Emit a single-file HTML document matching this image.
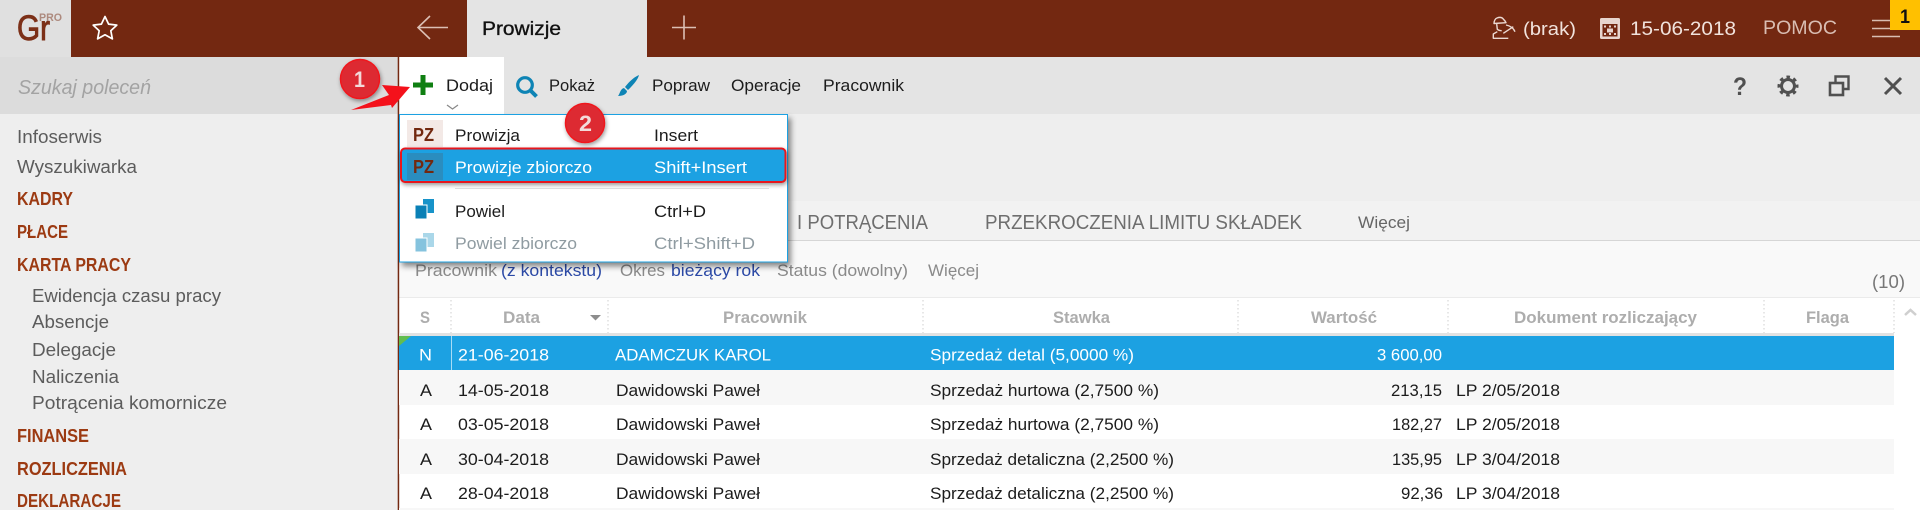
<!DOCTYPE html>
<html lang="pl">
<head>
<meta charset="utf-8">
<title>Prowizje</title>
<style>
html,body{margin:0;padding:0;width:1920px;height:510px;overflow:hidden;background:#fff}
svg{display:block}
text{font-family:"Liberation Sans",sans-serif;font-size:17px;fill:#1c1c1c;white-space:pre}
.hd{font-size:18px;fill:#f1e2dc}
.nav{font-size:18px;fill:#5c5c5c}
.sec{font-size:18px;font-weight:bold;fill:#9c3a12}
.tab{font-size:20px;fill:#6e6e6e}
.fl{font-size:17px;fill:#8a8a8a}
.fb{font-size:17px;fill:#2b49a6}
.th{font-size:17px;font-weight:bold;fill:#adadad}
.w{fill:#fff}
.pz{font-size:18px;font-weight:bold;fill:#72280f}
.dis{fill:#8f9ba1}
</style>
</head>
<body>
<svg width="1920" height="510" viewBox="0 0 1920 510" xmlns="http://www.w3.org/2000/svg">
<defs>
<filter id="sh" x="-5%" y="-5%" width="112%" height="115%"><feDropShadow dx="3" dy="4" stdDeviation="3" flood-color="#000" flood-opacity=".45"/></filter>
<filter id="sc" x="-30%" y="-30%" width="160%" height="160%"><feDropShadow dx="1" dy="2" stdDeviation="2" flood-color="#000" flood-opacity=".4"/></filter>
</defs>

<!-- backgrounds -->
<rect width="1920" height="510" fill="#fff"/>
<rect x="0" y="0" width="1920" height="57" fill="#732811"/>
<rect x="0" y="0" width="71" height="57" fill="#e0e0e0"/>
<rect x="467" y="0" width="180" height="57" fill="#e4e4e4"/>
<rect x="0" y="57" width="398" height="57" fill="#dcdcdc"/>
<rect x="0" y="114" width="398" height="396" fill="#eeeeee"/>
<rect x="399" y="57" width="1521" height="57" fill="#e4e4e4"/>
<rect x="399" y="57" width="105" height="57" fill="#fff"/>
<rect x="399" y="114" width="1521" height="87" fill="#eeeeee"/>
<rect x="399" y="201" width="1521" height="39" fill="#f2f2f2"/>
<rect x="399" y="240" width="1521" height="1" fill="#d6d6d6"/>
<rect x="399" y="241" width="1521" height="56" fill="#f9f9f9"/>
<rect x="399" y="297" width="1521" height="1" fill="#ebebeb"/>
<rect x="397.700" y="57" width="1.500" height="453" fill="#732811"/>

<!-- top bar -->
<text x="17" y="40" style="font-size:35px;fill:#7c3018;stroke:#7c3018;stroke-width:.9" textLength="33" lengthAdjust="spacingAndGlyphs">Gr</text>
<text x="39" y="21" style="font-size:11px;font-weight:bold;fill:#ad8a7e" textLength="23" lengthAdjust="spacingAndGlyphs">PRO</text>
<path d="M105 16.500l3.600 7.600 8.200 1-6 5.600 1.600 8.200-7.400-4.100-7.400 4.100 1.600-8.200-6-5.600 8.200-1z" fill="none" stroke="#fff" stroke-width="1.700" stroke-linejoin="round"/>
<path d="M430 16l-12 11.500 12 11.500M418 27.500h30" fill="none" stroke="#dcbfb4" stroke-width="1.600"/>
<text x="482" y="35" style="font-size:19px;fill:#111;stroke:#111;stroke-width:.35" textLength="79" lengthAdjust="spacingAndGlyphs">Prowizje</text>
<path d="M684 15.500v24M672 27.500h24" fill="none" stroke="#dcbfb4" stroke-width="1.600"/>

<g fill="none" stroke="#ecd9d2" stroke-width="1.400" stroke-linejoin="round">
<path d="M1494 23.500c0-3 1.500-5 3-5.500 2.500-1 5-.8 6.500 1.300 1.200 1.100 2 2.200 2.500 3.400zM1496.700 24l.6 5.300c1 1 2.500 1.400 4.400 1.400"/>
<path d="M1497.300 31.700l-4 2.300v4.300h15M1503.300 33.300l10-6.600M1506 25c4 .8 7.500 3 9 6.700"/>
</g>
<text class="hd" x="1523" y="35" textLength="53" lengthAdjust="spacingAndGlyphs">(brak)</text>
<rect x="1600" y="18" width="20" height="21" rx="1.500" fill="#e8d5ce"/>
<rect x="1602.500" y="24" width="15" height="12.500" fill="#732811"/>
<g fill="#e8d5ce"><rect x="1604" y="25.500" width="2" height="2"/><rect x="1609" y="25.500" width="2" height="2"/><rect x="1614" y="25.500" width="2" height="2"/><rect x="1604" y="33" width="2" height="2"/><rect x="1609" y="33" width="2" height="2"/><rect x="1614" y="33" width="2" height="2"/><rect x="1607" y="28.500" width="6" height="4"/></g>
<text class="hd" x="1630" y="35" style="font-size:19px" textLength="106" lengthAdjust="spacingAndGlyphs">15-06-2018</text>
<text x="1763" y="34" style="font-size:19px;fill:#d9bdb2" textLength="74" lengthAdjust="spacingAndGlyphs">POMOC</text>
<path d="M1872 20.500h28M1872 28.500h28M1872 36.500h28" stroke="#d9bdb2" stroke-width="1.500"/>
<rect x="1890" y="0" width="30" height="30" fill="#ffc000"/>
<text x="1900" y="23" style="font-size:19px;font-weight:bold;fill:#111" textLength="10" lengthAdjust="spacingAndGlyphs">1</text>

<!-- search row and toolbar -->
<text x="18" y="94" style="font-size:20px;font-style:italic;fill:#a3a3a3" textLength="133" lengthAdjust="spacingAndGlyphs">Szukaj poleceń</text>
<path d="M423 75v20M413 85h20" stroke="#0f7f12" stroke-width="5"/>
<text x="446" y="91" textLength="47" lengthAdjust="spacingAndGlyphs">Dodaj</text>
<path d="M447 105l5.500 4 5.500-4" fill="none" stroke="#888" stroke-width="1.200"/>
<circle cx="525" cy="85" r="7.300" fill="none" stroke="#0e84b5" stroke-width="3.200"/>
<path d="M530.500 90.500l6 6" stroke="#0e84b5" stroke-width="4"/>
<text x="549" y="91" textLength="46" lengthAdjust="spacingAndGlyphs">Pokaż</text>
<path d="M639 75c-1 5-7 11-11 15l-3-3c4-5 9-10 14-12zM624 88l3 3c0 3-4 5-9 5 2-2 2-7 6-8z" fill="#0e84b5"/>
<text x="652" y="91" textLength="58" lengthAdjust="spacingAndGlyphs">Popraw</text>
<text x="731" y="91" textLength="70" lengthAdjust="spacingAndGlyphs">Operacje</text>
<text x="823" y="91" textLength="81" lengthAdjust="spacingAndGlyphs">Pracownik</text>
<text x="1733" y="95" style="font-size:25px;font-weight:bold;fill:#505050" textLength="14" lengthAdjust="spacingAndGlyphs">?</text>
<circle cx="1788" cy="86" r="6.500" fill="none" stroke="#505050" stroke-width="3"/>
<circle cx="1788" cy="86" r="9" fill="none" stroke="#505050" stroke-width="3" stroke-dasharray="3.530 3.530" stroke-dashoffset="1.760"/>
<path d="M1835.500 82v-5.500h13v12.500h-5" fill="none" stroke="#505050" stroke-width="2.400"/>
<rect x="1830" y="83" width="13" height="12" fill="none" stroke="#505050" stroke-width="2.600"/>
<path d="M1885 78l16 16M1901 78l-16 16" stroke="#505050" stroke-width="3"/>

<!-- sidebar -->
<text class="nav" x="17" y="143" textLength="85" lengthAdjust="spacingAndGlyphs">Infoserwis</text>
<text class="nav" x="17" y="173" textLength="120" lengthAdjust="spacingAndGlyphs">Wyszukiwarka</text>
<text class="sec" x="17" y="205" textLength="56" lengthAdjust="spacingAndGlyphs">KADRY</text>
<text class="sec" x="17" y="238" textLength="51" lengthAdjust="spacingAndGlyphs">PŁACE</text>
<text class="sec" x="17" y="271" textLength="114" lengthAdjust="spacingAndGlyphs">KARTA PRACY</text>
<text class="nav" x="32" y="302" textLength="189" lengthAdjust="spacingAndGlyphs">Ewidencja czasu pracy</text>
<text class="nav" x="32" y="328" textLength="77" lengthAdjust="spacingAndGlyphs">Absencje</text>
<text class="nav" x="32" y="356" textLength="84" lengthAdjust="spacingAndGlyphs">Delegacje</text>
<text class="nav" x="32" y="383" textLength="87" lengthAdjust="spacingAndGlyphs">Naliczenia</text>
<text class="nav" x="32" y="409" textLength="195" lengthAdjust="spacingAndGlyphs">Potrącenia komornicze</text>
<text class="sec" x="17" y="442" textLength="72" lengthAdjust="spacingAndGlyphs">FINANSE</text>
<text class="sec" x="17" y="475" textLength="110" lengthAdjust="spacingAndGlyphs">ROZLICZENIA</text>
<text class="sec" x="17" y="507" textLength="104" lengthAdjust="spacingAndGlyphs">DEKLARACJE</text>

<!-- tabs -->
<text class="tab" x="797" y="229" textLength="131" lengthAdjust="spacingAndGlyphs">I POTRĄCENIA</text>
<text class="tab" x="985" y="229" textLength="317" lengthAdjust="spacingAndGlyphs">PRZEKROCZENIA LIMITU SKŁADEK</text>
<text x="1358" y="228" style="fill:#666" textLength="52" lengthAdjust="spacingAndGlyphs">Więcej</text>

<!-- filters -->
<text class="fl" x="415" y="276" textLength="82" lengthAdjust="spacingAndGlyphs">Pracownik</text>
<text class="fb" x="501" y="276" textLength="101" lengthAdjust="spacingAndGlyphs">(z kontekstu)</text>
<text class="fl" x="620" y="276" textLength="45" lengthAdjust="spacingAndGlyphs">Okres</text>
<text class="fb" x="671" y="276" textLength="89" lengthAdjust="spacingAndGlyphs">bieżący rok</text>
<text class="fl" x="777" y="276" textLength="131" lengthAdjust="spacingAndGlyphs">Status (dowolny)</text>
<text class="fl" x="928" y="276" textLength="51" lengthAdjust="spacingAndGlyphs">Więcej</text>
<text x="1872" y="288" style="font-size:18px;fill:#777" textLength="33" lengthAdjust="spacingAndGlyphs">(10)</text>

<!-- table header -->
<rect x="399" y="333" width="1495" height="3" fill="#e2e2e2"/>
<g stroke="#cfcfcf" stroke-dasharray="1.500 2.500"><path d="M451 300v33M608 300v33M923 300v33M1238 300v33M1448 300v33M1764 300v33M1894 300v33"/></g>
<text class="th" x="420" y="323" textLength="10" lengthAdjust="spacingAndGlyphs">S</text>
<text class="th" x="503" y="323" textLength="37" lengthAdjust="spacingAndGlyphs">Data</text>
<path d="M590 315h11l-5.500 5.500z" fill="#8d8d8d"/>
<text class="th" x="723" y="323" textLength="84" lengthAdjust="spacingAndGlyphs">Pracownik</text>
<text class="th" x="1053" y="323" textLength="57" lengthAdjust="spacingAndGlyphs">Stawka</text>
<text class="th" x="1311" y="323" textLength="66" lengthAdjust="spacingAndGlyphs">Wartość</text>
<text class="th" x="1514" y="323" textLength="183" lengthAdjust="spacingAndGlyphs">Dokument rozliczający</text>
<text class="th" x="1806" y="323" textLength="43" lengthAdjust="spacingAndGlyphs">Flaga</text>
<path d="M1905 315l5.500-5 5.500 5" fill="none" stroke="#cfcfcf" stroke-width="2.500"/>

<!-- rows -->
<rect x="399" y="336" width="1495" height="34" fill="#1ca1e2"/>
<rect x="399" y="370" width="1495" height="35" fill="#f7f7f7"/>
<rect x="399" y="439" width="1495" height="35" fill="#f7f7f7"/>
<rect x="399" y="508" width="1495" height="2" fill="#f7f7f7"/>
<rect x="451" y="336" width="1" height="34" fill="#a8dcf5"/>
<path d="M399 336h12l-12 10z" fill="#62bd4f"/>

<text class="w" x="419" y="360.500" textLength="13" lengthAdjust="spacingAndGlyphs">N</text>
<text class="w" x="458" y="360.500" textLength="91" lengthAdjust="spacingAndGlyphs">21-06-2018</text>
<text class="w" x="615" y="360.500" textLength="156" lengthAdjust="spacingAndGlyphs">ADAMCZUK KAROL</text>
<text class="w" x="930" y="360.500" textLength="204" lengthAdjust="spacingAndGlyphs">Sprzedaż detal (5,0000 %)</text>
<text class="w" x="1377" y="360.500" textLength="65" lengthAdjust="spacingAndGlyphs">3 600,00</text>

<text x="420" y="396" textLength="12" lengthAdjust="spacingAndGlyphs">A</text>
<text x="458" y="396" textLength="91" lengthAdjust="spacingAndGlyphs">14-05-2018</text>
<text x="616" y="396" textLength="144" lengthAdjust="spacingAndGlyphs">Dawidowski Paweł</text>
<text x="930" y="396" textLength="229" lengthAdjust="spacingAndGlyphs">Sprzedaż hurtowa (2,7500 %)</text>
<text x="1391" y="396" textLength="51" lengthAdjust="spacingAndGlyphs">213,15</text>
<text x="1456" y="396" textLength="104" lengthAdjust="spacingAndGlyphs">LP 2/05/2018</text>

<text x="420" y="430" textLength="12" lengthAdjust="spacingAndGlyphs">A</text>
<text x="458" y="430" textLength="91" lengthAdjust="spacingAndGlyphs">03-05-2018</text>
<text x="616" y="430" textLength="144" lengthAdjust="spacingAndGlyphs">Dawidowski Paweł</text>
<text x="930" y="430" textLength="229" lengthAdjust="spacingAndGlyphs">Sprzedaż hurtowa (2,7500 %)</text>
<text x="1392" y="430" textLength="50" lengthAdjust="spacingAndGlyphs">182,27</text>
<text x="1456" y="430" textLength="104" lengthAdjust="spacingAndGlyphs">LP 2/05/2018</text>

<text x="420" y="465" textLength="12" lengthAdjust="spacingAndGlyphs">A</text>
<text x="458" y="465" textLength="91" lengthAdjust="spacingAndGlyphs">30-04-2018</text>
<text x="616" y="465" textLength="144" lengthAdjust="spacingAndGlyphs">Dawidowski Paweł</text>
<text x="930" y="465" textLength="244" lengthAdjust="spacingAndGlyphs">Sprzedaż detaliczna (2,2500 %)</text>
<text x="1392" y="465" textLength="50" lengthAdjust="spacingAndGlyphs">135,95</text>
<text x="1456" y="465" textLength="104" lengthAdjust="spacingAndGlyphs">LP 3/04/2018</text>

<text x="420" y="499" textLength="12" lengthAdjust="spacingAndGlyphs">A</text>
<text x="458" y="499" textLength="91" lengthAdjust="spacingAndGlyphs">28-04-2018</text>
<text x="616" y="499" textLength="144" lengthAdjust="spacingAndGlyphs">Dawidowski Paweł</text>
<text x="930" y="499" textLength="244" lengthAdjust="spacingAndGlyphs">Sprzedaż detaliczna (2,2500 %)</text>
<text x="1401" y="499" textLength="42" lengthAdjust="spacingAndGlyphs">92,36</text>
<text x="1456" y="499" textLength="104" lengthAdjust="spacingAndGlyphs">LP 3/04/2018</text>

<!-- dropdown -->
<rect x="399.500" y="114.500" width="388" height="147.500" fill="#fff" stroke="#1ca1e2" filter="url(#sh)"/>
<rect x="407" y="120" width="36" height="27" fill="#f3e9e6"/>
<text class="pz" x="413" y="141" textLength="21" lengthAdjust="spacingAndGlyphs">PZ</text>
<text x="455" y="141" textLength="65" lengthAdjust="spacingAndGlyphs">Prowizja</text>
<text x="654" y="141" textLength="44" lengthAdjust="spacingAndGlyphs">Insert</text>
<rect x="401" y="148.500" width="384.500" height="33.500" rx="4" fill="#1ca1e2" stroke="#e8141c" stroke-width="2" filter="url(#sc)"/>
<rect x="407" y="153" width="36" height="27" fill="#2a8dbf"/>
<text class="pz" x="413" y="173" textLength="21" lengthAdjust="spacingAndGlyphs">PZ</text>
<text class="w" x="455" y="173" textLength="137" lengthAdjust="spacingAndGlyphs">Prowizje zbiorczo</text>
<text class="w" x="654" y="173" textLength="93" lengthAdjust="spacingAndGlyphs">Shift+Insert</text>
<rect x="455" y="188" width="314" height="1" fill="#dcdcdc"/>
<rect x="423" y="199" width="11" height="14" fill="#1793c9"/>
<rect x="415" y="205" width="12" height="14" stroke="#fff" fill="#0a80b6"/>
<text x="455" y="217" textLength="50" lengthAdjust="spacingAndGlyphs">Powiel</text>
<text x="654" y="217" textLength="52" lengthAdjust="spacingAndGlyphs">Ctrl+D</text>
<rect x="423" y="233" width="11" height="14" fill="#aad7e9"/>
<rect x="415" y="238" width="12" height="14" stroke="#fff" fill="#85c3de"/>
<text class="dis" x="455" y="249" textLength="122" lengthAdjust="spacingAndGlyphs">Powiel zbiorczo</text>
<text class="dis" x="654" y="249" textLength="101" lengthAdjust="spacingAndGlyphs">Ctrl+Shift+D</text>

<!-- annotations -->
<path d="M410 87l-28-2 7 10-38 15 40-5 1 3z" fill="#f4111b"/>
<g filter="url(#sc)">
<circle cx="360" cy="79" r="19.500" fill="#dd2c32" stroke="#f0181f" stroke-width="1.500"/>
<circle cx="585" cy="123" r="19.500" fill="#dd2c32" stroke="#f0181f" stroke-width="1.500"/>
</g>
<text x="354" y="87" style="font-size:22px;font-weight:bold;fill:#f3dada" textLength="11" lengthAdjust="spacingAndGlyphs">1</text>
<text x="579" y="131" style="font-size:22px;font-weight:bold;fill:#f3dada" textLength="13" lengthAdjust="spacingAndGlyphs">2</text>
</svg>
</body>
</html>
